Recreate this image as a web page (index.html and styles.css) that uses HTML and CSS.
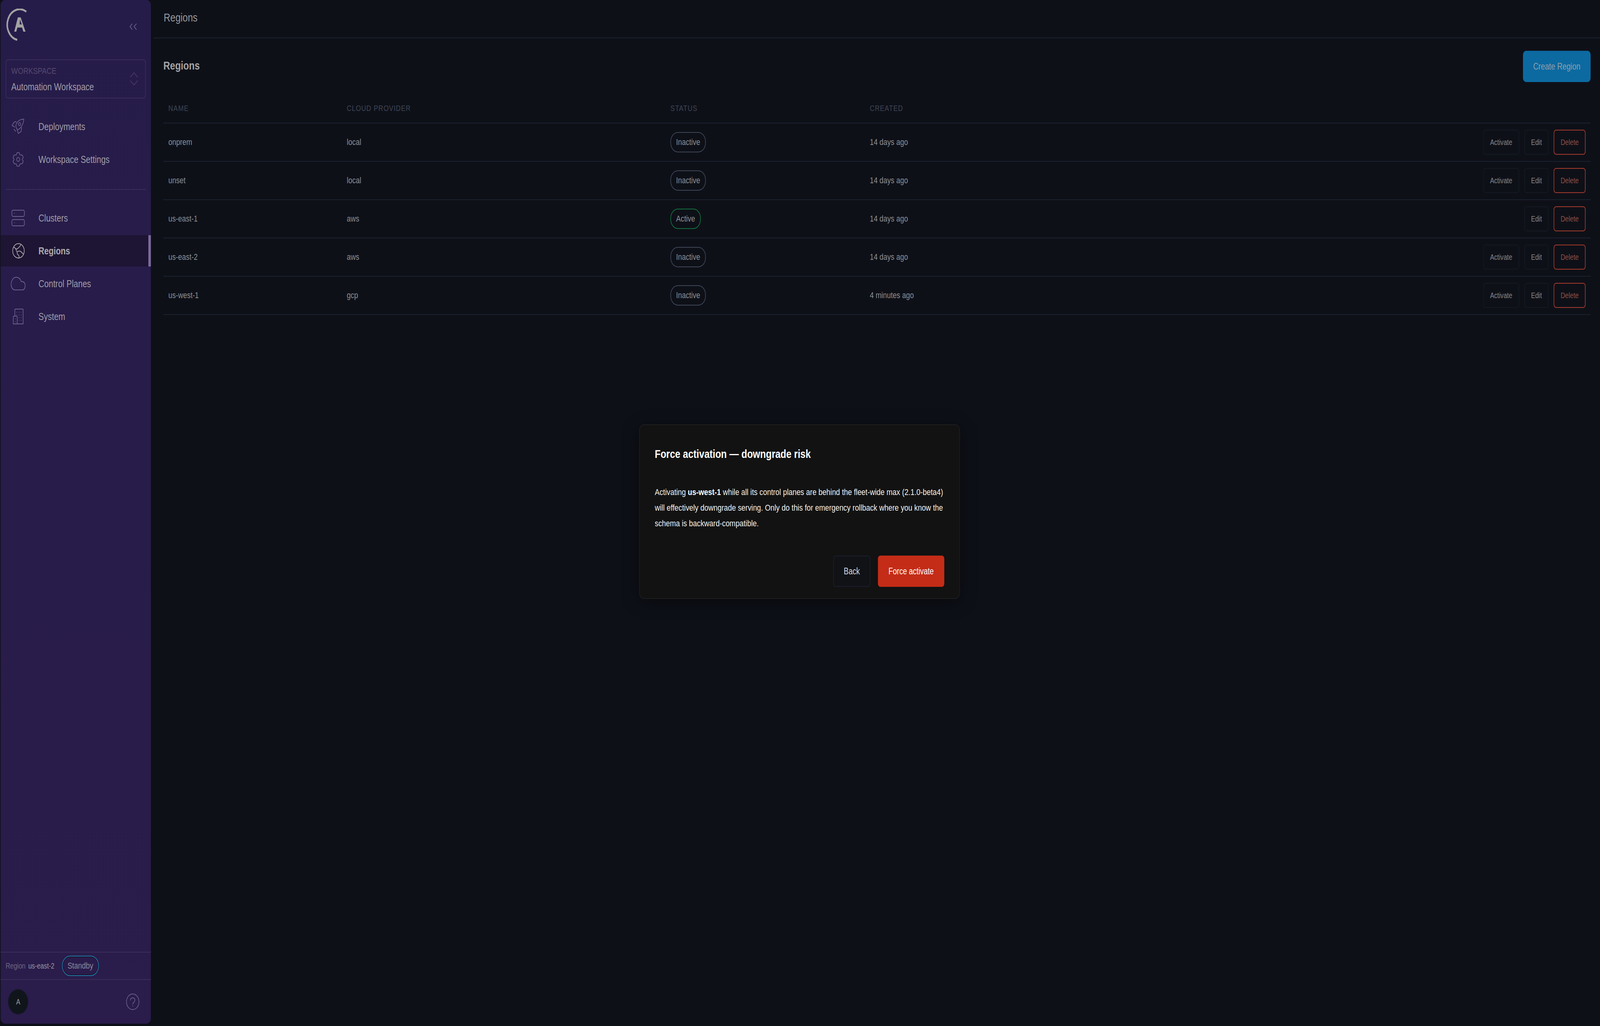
FILE: index.html
```html
<!DOCTYPE html>
<html lang="en">
<head>
<meta charset="utf-8">
<title>Regions</title>
<link rel="stylesheet" href="styles.css">
</head>
<body>
<div class="stage">
<div class="app">
  <aside class="sidebar">
    <div class="side-head">
      <svg class="logo" viewBox="20 22 66 84" width="66" height="84">
        <path d="M84 30A39.5 39.5 0 1 0 55 102" fill="none" stroke="#a3a3a3" stroke-width="5"/>
        <path fill="#a3a3a3" fill-rule="evenodd" d="M57 44.500H66L81.500 81H74.500L70.500 70.500H55.500L52 81H45.500ZM63.800 50L62.800 62.500H69.500Z"/>
      </svg>
      <svg class="collapse" viewBox="410 52 32 32" width="32" height="32">
        <path d="M422.700 60.700L415.300 68L422.700 75.700M436 60.700L428.300 68L436 75.700" fill="none" stroke="#6b6188" stroke-width="2"/>
      </svg>
    </div>
    <div class="select">
      <div class="select-text">
        <div class="select-label">WORKSPACE</div>
        <div class="select-value">Automation Workspace</div>
      </div>
      <svg viewBox="412 182 32 40" width="32" height="40">
        <path d="M416 198L428 186L440 198M416 206L428 217.500L440 206" fill="none" stroke="#46396a" stroke-width="2"/>
      </svg>
    </div>
    <nav class="nav">
      <a class="nav-item">
        <svg class="nav-icon" viewBox="34 300 48 48">
          <path d="M76 305C69 305 63 306.500 58 310.500C54 313.500 51 318 50.700 322C50.700 325 53 329 55.500 331.700C59 333 63 329 67 325.500C72 320 75.500 313 76 305Z"/>
          <circle cx="62.300" cy="317.700" r="3.700"/>
          <path d="M51.500 311.700C49 311.500 47 311.500 45.500 312.500L38.500 321.200L46.500 325M69.300 326.700L67.300 336.700L58.300 341.700L55 332M45 331L50 335.700"/>
        </svg>
        <span>Deployments</span>
      </a>
      <a class="nav-item">
        <svg class="nav-icon" viewBox="34 384 48 48">
          <path d="M54 391.500C55.500 390.300 60.500 390.300 62 391.500C63 392.600 62.500 395.500 64 396.500C65.500 397.500 68 396 69.500 396.500C71.500 397.500 74 401.500 74 403.500C74 405 71 406.500 71 408C71 409.500 74 411 74 412.500C74 414.500 71.500 418.500 69.500 419.500C68 420 65.500 418.500 64 419.500C62.500 420.500 63 423.400 62 424.500C60.500 425.700 55.500 425.700 54 424.500C53 423.400 53.500 420.500 52 419.500C50.500 418.500 48 420 46.500 419.500C44.500 418.500 42 414.500 42 412.500C42 411 45 409.500 45 408C45 406.500 42 405 42 403.500C42 401.500 44.500 397.500 46.500 396.500C48 396 50.500 397.500 52 396.500C53.500 395.500 53 392.600 54 391.500Z"/>
          <circle cx="58" cy="408" r="5"/>
        </svg>
        <span>Workspace Settings</span>
      </a>
    </nav>
    <div class="nav-divider"></div>
    <nav class="nav">
      <a class="nav-item">
        <svg class="nav-icon" viewBox="34 534 48 48">
          <rect x="38" y="538" width="40" height="16" rx="4"/>
          <rect x="38" y="562" width="40" height="16" rx="4"/>
          <circle class="icon-dot" cx="46" cy="546" r="1"/>
          <circle class="icon-dot" cx="46" cy="570" r="1"/>
        </svg>
        <span>Clusters</span>
      </a>
      <a class="nav-item is-active">
        <svg class="nav-icon" viewBox="34 618 48 48">
          <circle cx="59" cy="642" r="18.500"/>
          <path d="M66 625C66 631 61 632 58 635C55.500 637.500 53 638 50 636.500C48.500 635.500 47 633.500 44.500 632.500M50 636.500C51 640 53 642 54.500 645C55.500 647.500 55 650 56 651C59 652.500 62.500 654 60 660.500M54.500 645C58 642.500 62 642 65 643C69 645 71.500 647.500 75 651"/>
        </svg>
        <span>Regions</span>
      </a>
      <a class="nav-item">
        <svg class="nav-icon" viewBox="34 702 48 48">
          <path d="M48 742C41 742 35.500 736 35.500 728C35.500 717.500 43 709.500 52 709.500C59.500 709.500 65 714 68 721C69 720.500 70 720.500 71 720.500C76.500 720.500 80.500 725.500 80.500 731.500C80.500 737.500 76.500 742 72 742Z"/>
        </svg>
        <span>Control Planes</span>
      </a>
      <a class="nav-item">
        <svg class="nav-icon" viewBox="34 786 48 48">
          <path d="M47.300 809V793.500C47.300 792 48.300 791 50 791H71.500C73 791 74 792 74 793.500V829H42.500V812C42.500 810 44 809 46 809H52C54 809 55 810 55 812V829"/>
          <g class="icon-dots">
            <circle cx="53.300" cy="799.300" r="1"/><circle cx="60.700" cy="799.300" r="1"/><circle cx="67.700" cy="799.300" r="1"/>
            <circle cx="53.300" cy="806" r="1"/><circle cx="60.700" cy="806" r="1"/><circle cx="67.700" cy="806" r="1"/>
            <circle cx="60.700" cy="813" r="1"/><circle cx="67.700" cy="813" r="1"/>
            <circle cx="60.700" cy="820" r="1"/><circle cx="67.700" cy="820" r="1"/>
            <circle cx="49" cy="816" r="1"/><circle cx="49" cy="823" r="1"/>
          </g>
        </svg>
        <span>System</span>
      </a>
    </nav>
    <div class="side-foot">
      <div class="region-row">
        <span class="region-key">Region</span>
        <span class="region-name">us-east-2</span>
        <span class="standby">Standby</span>
      </div>
      <div class="user-row">
        <div class="avatar">A</div>
        <svg class="help" viewBox="403 2543 44 44" width="44" height="44">
          <circle cx="425" cy="2565" r="20"/>
          <path d="M418 2561C418 2557 421 2555 425 2555C429 2555 432 2557 432 2561C432 2564 430 2565 428 2567C426 2568 425 2569 425 2571"/>
          <circle class="help-dot" cx="425" cy="2575.500" r="1.200"/>
        </svg>
      </div>
    </div>
  </aside>

  <main class="main">
    <header class="topbar">Regions</header>
    <section class="content">
      <div class="section-head">
        <h1 class="section-title">Regions</h1>
        <button class="btn-create">Create Region</button>
      </div>
      <table class="table">
        <colgroup>
          <col class="col-name"><col class="col-cloud"><col class="col-status"><col class="col-created"><col>
        </colgroup>
        <thead>
          <tr><th>NAME</th><th>CLOUD PROVIDER</th><th>STATUS</th><th>CREATED</th><th></th></tr>
        </thead>
        <tbody>
          <tr>
            <td>onprem</td><td>local</td><td><span class="pill">Inactive</span></td><td>14 days ago</td>
            <td><div class="actions"><button class="btn">Activate</button><button class="btn">Edit</button><button class="btn btn-danger">Delete</button></div></td>
          </tr>
          <tr>
            <td>unset</td><td>local</td><td><span class="pill">Inactive</span></td><td>14 days ago</td>
            <td><div class="actions"><button class="btn">Activate</button><button class="btn">Edit</button><button class="btn btn-danger">Delete</button></div></td>
          </tr>
          <tr>
            <td>us-east-1</td><td>aws</td><td><span class="pill pill-active">Active</span></td><td>14 days ago</td>
            <td><div class="actions"><button class="btn">Edit</button><button class="btn btn-danger">Delete</button></div></td>
          </tr>
          <tr>
            <td>us-east-2</td><td>aws</td><td><span class="pill">Inactive</span></td><td>14 days ago</td>
            <td><div class="actions"><button class="btn">Activate</button><button class="btn">Edit</button><button class="btn btn-danger">Delete</button></div></td>
          </tr>
          <tr>
            <td>us-west-1</td><td>gcp</td><td><span class="pill">Inactive</span></td><td>4 minutes ago</td>
            <td><div class="actions"><button class="btn">Activate</button><button class="btn">Edit</button><button class="btn btn-danger">Delete</button></div></td>
          </tr>
        </tbody>
      </table>
    </section>
  </main>
</div>

<div class="overlay">
  <div class="modal">
    <h2 class="modal-title">Force activation — downgrade risk</h2>
    <p class="modal-body">Activating <strong>us-west-1</strong> while all its control planes are behind the fleet-wide max (2.1.0-beta4)<br>will effectively downgrade serving. Only do this for emergency rollback where you know the<br>schema is backward-compatible.</p>
    <div class="modal-actions">
      <button class="modal-btn modal-back">Back</button>
      <button class="modal-btn modal-force">Force activate</button>
    </div>
  </div>
</div>
</div>
</body>
</html>
```

FILE: styles.css
```css
* { box-sizing: border-box; }
html, body { margin: 0; height: 100%; }
html { overflow: hidden; background: #0e1018; }
body {
  color: #8c8f93;
  font-family: "Liberation Sans", Arial, sans-serif;
  overflow: hidden;
}
button { font-family: inherit; cursor: pointer; }

.stage {
  position: relative;
  width: 5112px;
  height: 2626px;
  background: #0e1018;
  transform-origin: 0 0;
}
@media (max-width: 4096px) {
  .stage { transform: scaleX(0.80125); }
}

.app { display: flex; height: 100%; }

.sidebar {
  flex: 0 0 480px;
  margin: 0 0 6px 2px;
  border-radius: 14px;
  background: linear-gradient(#261c4a, #2a1c4b);
  display: flex;
  flex-direction: column;
}
.side-head {
  height: 152px;
  padding: 22px 40px 0 18px;
  display: flex;
  justify-content: space-between;
  align-items: flex-start;
}
.collapse { margin-top: 30px; }

.select {
  width: 448px;
  height: 100px;
  margin: 0 0 32px 16px;
  padding: 0 20px 0 16px;
  border: 2px solid #392e59;
  border-radius: 8px;
  display: flex;
  justify-content: space-between;
  align-items: center;
}
.select-label { font-size: 22.400px; line-height: 40px; color: #55496e; }
.select-value { font-size: 25.600px; line-height: 40px; color: #a09ca8; }

.nav { display: flex; flex-direction: column; gap: 4px; }
.nav-item {
  height: 80px;
  padding-left: 32px;
  display: flex;
  align-items: center;
  gap: 41px;
  font-size: 25.600px;
  color: #a09ca8;
}
.nav-icon {
  width: 48px;
  height: 48px;
  flex: none;
  fill: none;
  stroke: #6f6090;
  stroke-width: 2;
  stroke-linejoin: round;
  stroke-linecap: round;
}
.icon-dot, .icon-dots circle { fill: #6f6090; stroke: none; }
.nav-item.is-active {
  background: #1e1433;
  border-right: 8px solid #7c6b9c;
  font-weight: 700;
  color: #ababae;
}
.is-active .nav-icon { stroke: #a8a8aa; }
.nav-divider {
  height: 2px;
  margin: 36px 16px 32px;
  background: #392e59;
}

.side-foot { margin-top: auto; }
.region-row {
  height: 70px;
  border-top: 2px solid #3b2e5a;
  padding-left: 16px;
  display: flex;
  align-items: center;
  font-size: 20px;
}
.region-key { color: #6f6880; margin-right: 9px; }
.region-name { color: #9a98a4; margin-right: 24px; }
.standby {
  height: 52px;
  padding: 0 16px;
  border: 2px solid #1f78a4;
  border-radius: 26px;
  box-shadow: inset 0 0 0 2px #1b1530;
  display: flex;
  align-items: center;
  font-size: 22.400px;
  color: #8e8a98;
}
.user-row {
  height: 114px;
  border-top: 2px solid #3b2e5a;
  padding: 0 36px 0 24px;
  display: flex;
  justify-content: space-between;
  align-items: center;
}
.avatar {
  width: 64px;
  height: 64px;
  border-radius: 50%;
  background: #10151c;
  color: #9a9a9a;
  font-size: 20px;
  display: flex;
  align-items: center;
  justify-content: center;
}
.help { fill: none; stroke: #6c5e8c; stroke-width: 2; stroke-linecap: round; }
.help .help-dot { fill: #6c5e8c; stroke: none; }

.main { flex: 1; min-width: 0; margin-left: 8px; display: flex; flex-direction: column; }
.topbar {
  height: 98px;
  padding: 0 0 6px 33px;
  border-bottom: 2px solid #1a222e;
  display: flex;
  align-items: center;
  font-size: 29.440px;
  color: #96989c;
}
.content { padding: 32px 30px 0 32px; }
.section-head {
  height: 80px;
  margin-bottom: 30px;
  display: flex;
  justify-content: space-between;
  align-items: center;
}
.section-title { margin: 0 0 4px; font-size: 29.440px; font-weight: 700; color: #a3a3a5; }
.btn-create {
  width: 216px;
  height: 80px;
  border: 0;
  border-radius: 10px;
  background: #0c6aa1;
  color: #8fa0ab;
  font-size: 23.400px;
}

.table { width: 100%; table-layout: fixed; border-collapse: separate; border-spacing: 0; }
.col-name { width: 570px; }
.col-cloud { width: 1034px; }
.col-status { width: 637px; }
.col-created { width: 800px; }
.table th {
  height: 76px;
  padding: 0 16px;
  border-bottom: 2px solid #1a222e;
  text-align: left;
  font-size: 20.800px;
  font-weight: 400;
  letter-spacing: 1.250px;
  color: #3f4654;
}
.table td {
  height: 98px;
  padding: 0 16px;
  border-bottom: 2px solid #1a222e;
  font-size: 22.400px;
  color: #8c8f93;
}
.pill {
  display: inline-flex;
  align-items: center;
  height: 52px;
  padding: 0 16px;
  border: 2px solid #3d4655;
  border-radius: 24px;
  vertical-align: middle;
}
.pill-active { border-color: #12713c; }
.actions { display: flex; justify-content: flex-end; gap: 16px; }
.btn {
  height: 64px;
  padding: 0 20px;
  border: 2px solid #131a22;
  border-radius: 8px;
  background: transparent;
  color: #84878b;
  font-size: 20px;
}
.btn-danger { border-color: #a33a2b; color: #8f5046; }

.overlay {
  position: absolute;
  inset: 0;
  padding: 0 3px 7px 0;
  display: flex;
  align-items: center;
  justify-content: center;
}
.modal {
  width: 1025px;
  height: 447px;
  padding: 48px 48px 29px;
  border: 2px solid #1e1e1f;
  border-radius: 16px;
  background: #121212;
  box-shadow: 0 8px 48px rgba(0, 0, 0, 0.45);
  display: flex;
  flex-direction: column;
}
.modal-title { margin: 0; font-size: 30px; line-height: 52px; font-weight: 700; color: #fff; }
.modal-body { margin: 51px 0 0; font-size: 22.900px; line-height: 40px; color: #f2f2f2; white-space: nowrap; }
.modal-body strong { font-weight: 700; color: #fff; }
.modal-actions { margin-top: auto; display: flex; justify-content: flex-end; gap: 24px; }
.modal-btn { height: 80px; border-radius: 8px; font-size: 23.040px; }
.modal-back { width: 119px; border: 2px solid #1a1f2c; background: #101216; color: #d8d8e0; }
.modal-force { width: 212px; border: 0; background: #c42c17; color: #fff; }
```
